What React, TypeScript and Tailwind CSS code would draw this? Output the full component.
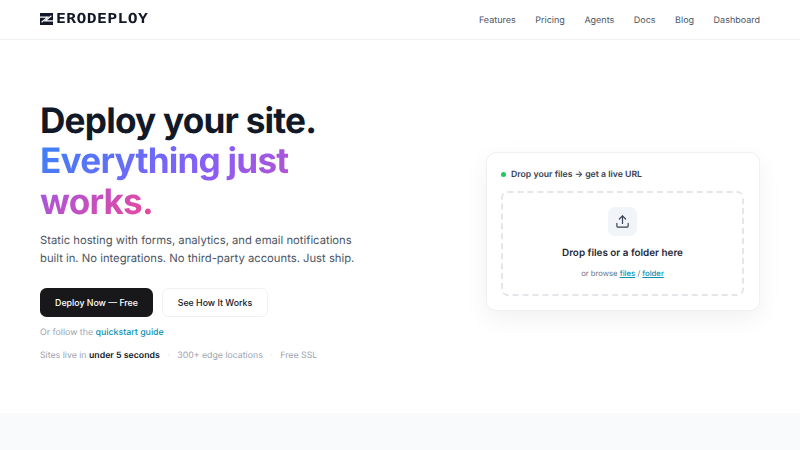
import { Upload } from "lucide-react";

export default function App() {
  return (
    <div className="w-[800px] h-[450px] overflow-hidden bg-white font-['Inter',sans-serif] [text-rendering:geometricPrecision] flex flex-col">
      <header className="h-10 shrink-0 border-b border-[#f0f1f3] flex items-center justify-between pl-10 pr-10">
        <div className="flex items-center">
          <svg width="13" height="12" viewBox="0 0 13 12" className="mr-[3px]">
            <rect width="13" height="12" fill="#111827" />
            <path fill="none" stroke="#fff" strokeWidth="1.2" d="M0 4.2H7.6L1.6 9.2M13 7.8H5.4L11.4 2.8" />
          </svg>
          <span className="inline-block origin-left scale-x-[1.2] font-['DejaVu_Sans_Mono',monospace] font-bold text-[13.7px] leading-none text-[#111827] tracking-[0.3px]">ERODEPLOY</span>
        </div>
        <nav className="flex items-center gap-[19.5px] pt-[1px] text-[9px] leading-none text-[#4b5563]">
          <a>Features</a>
          <a>Pricing</a>
          <a>Agents</a>
          <a>Docs</a>
          <a>Blog</a>
          <a>Dashboard</a>
        </nav>
      </header>
      <main className="h-[373px] shrink-0 flex items-center justify-between pl-10 pr-10">
        <div className="w-[360px] pt-[10px]">
          <h1 className="text-[35.2px] leading-[40.5px] font-bold tracking-[-0.8px] text-[#111827]">
            Deploy your site.
            <br />
            <span className="bg-[linear-gradient(135deg,#3b82f6,#8b5cf6,#ec4899)] bg-clip-text text-transparent">Everything just works.</span>
          </h1>
          <p className="mt-[9px] text-[11.25px] leading-[18px] text-[#4b5563] w-[325px]">
            Static hosting with forms, analytics, and email notifications built in. No integrations. No third-party accounts. Just ship.
          </p>
          <div className="mt-[21px] flex gap-[9px]">
            <button className="w-[113px] h-[29px] rounded-[6.6px] bg-[#18181b] text-white text-[8.8px] font-medium">Deploy Now — Free</button>
            <button className="w-[106px] h-[29px] rounded-[6.6px] border border-[#f0f1f3] bg-white text-[#111827] text-[8.8px] font-medium">See How It Works</button>
          </div>
          <p className="mt-[10px] text-[8.8px] leading-[11px] text-[#9ca3af]">
            Or follow the <a className="text-[#0891b2] font-medium">quickstart guide</a>
          </p>
          <div className="mt-[13px] flex items-center gap-[7.5px] text-[8.75px] leading-[11px] text-[#9ca3af]">
            <span>Sites live in <strong className="font-semibold text-[#111827]">under 5 seconds</strong></span>
            <span className="text-[#d1d5db]">·</span>
            <span>300+ edge locations</span>
            <span className="text-[#d1d5db]">·</span>
            <span>Free SSL</span>
          </div>
        </div>
        <div className="w-[274px] h-[159px] mt-[9px] mr-[0.5px] rounded-[10px] border border-[#eef0f2] bg-white shadow-[0_8px_24px_rgba(0,0,0,0.06)] px-[14.5px] pt-[16px]">
          <div className="flex items-center gap-[5px] h-[15px] text-[8.7px] font-semibold text-[#374151]">
            <span className="w-[5px] h-[5px] mb-[3px] rounded-full bg-[#22c55e]" />
            Drop your files → get a live URL
          </div>
          <div className="mt-[7px] h-[105px] rounded-[6.6px] border-2 border-dashed border-[#e4e6ea] flex flex-col items-center pt-[14px]">
            <div className="w-[29px] h-[29px] rounded-[6.6px] bg-[#f1f5f9] flex items-center justify-center">
              <Upload size={15} color="#374151" strokeWidth={1.9} />
            </div>
            <p className="mt-[11px] text-[9.9px] leading-[13px] font-semibold text-[#1f2937]">Drop files or a folder here</p>
            <p className="mt-[9px] text-[7.7px] leading-[10px] text-[#6b7280]">
              or browse <a className="text-[#0891b2] underline font-medium">files</a> / <a className="text-[#0891b2] underline font-medium">folder</a>
            </p>
          </div>
        </div>
      </main>
      <div className="flex-1 bg-[#f9fafb]" />
    </div>
  );
}
